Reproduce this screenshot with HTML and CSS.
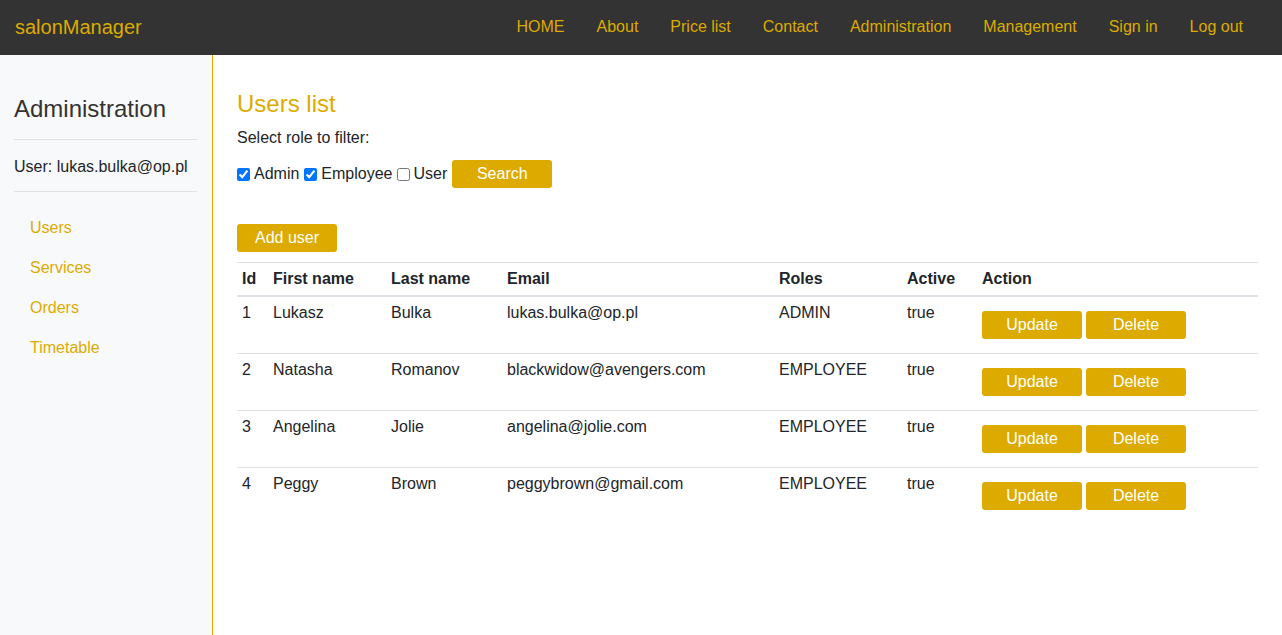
FILE: index.html
```html
<!DOCTYPE html>
<html lang="en">
<head>
<meta charset="utf-8">
<title>salonManager</title>
<link rel="stylesheet" href="styles.css">
</head>
<body>
<header class="navbar">
  <a class="brand" href="#">salonManager</a>
  <nav class="nav">
    <a href="#">HOME</a>
    <a href="#">About</a>
    <a href="#">Price list</a>
    <a href="#">Contact</a>
    <a href="#">Administration</a>
    <a href="#">Management</a>
    <a href="#">Sign in</a>
    <a href="#">Log out</a>
  </nav>
</header>
<div class="layout">
  <aside class="sidebar">
    <h3 class="side-title">Administration</h3>
    <hr class="divider divider-top">
    <p class="side-user">User: lukas.bulka@op.pl</p>
    <hr class="divider divider-bottom">
    <ul class="side-nav">
      <li><a href="#">Users</a></li>
      <li><a href="#">Services</a></li>
      <li><a href="#">Orders</a></li>
      <li><a href="#">Timetable</a></li>
    </ul>
  </aside>
  <main class="content">
    <h2 class="page-title">Users list</h2>
    <p class="filter-label">Select role to filter:</p>
    <form class="filter">
      <label class="check check-wide"><input type="checkbox" checked> Admin</label>
      <label class="check"><input type="checkbox" checked> Employee</label>
      <label class="check check-wide"><input type="checkbox"> User</label>
      <button type="button" class="btn">Search</button>
    </form>
    <div class="add-row"><button type="button" class="btn">Add user</button></div>
    <table class="users">
      <colgroup>
        <col class="c-id"><col class="c-first"><col class="c-last"><col class="c-email"><col class="c-roles"><col class="c-active"><col class="c-action">
      </colgroup>
      <thead>
        <tr><th>Id</th><th>First name</th><th>Last name</th><th>Email</th><th>Roles</th><th>Active</th><th>Action</th></tr>
      </thead>
      <tbody>
        <tr><td>1</td><td>Lukasz</td><td>Bulka</td><td>lukas.bulka@op.pl</td><td>ADMIN</td><td>true</td><td class="actions"><button type="button" class="btn">Update</button> <button type="button" class="btn">Delete</button></td></tr>
        <tr><td>2</td><td>Natasha</td><td>Romanov</td><td>blackwidow@avengers.com</td><td>EMPLOYEE</td><td>true</td><td class="actions"><button type="button" class="btn">Update</button> <button type="button" class="btn">Delete</button></td></tr>
        <tr><td>3</td><td>Angelina</td><td>Jolie</td><td>angelina@jolie.com</td><td>EMPLOYEE</td><td>true</td><td class="actions"><button type="button" class="btn">Update</button> <button type="button" class="btn">Delete</button></td></tr>
        <tr><td>4</td><td>Peggy</td><td>Brown</td><td>peggybrown@gmail.com</td><td>EMPLOYEE</td><td>true</td><td class="actions"><button type="button" class="btn">Update</button> <button type="button" class="btn">Delete</button></td></tr>
      </tbody>
    </table>
  </main>
</div>
</body>
</html>
```
FILE: styles.css
```css
* { box-sizing: border-box; }
html, body { height: 100%; }
body {
  margin: 0;
  font-family: "Liberation Sans", Arial, sans-serif;
  font-size: 16px;
  line-height: 24px;
  color: #212529;
  background: #fff;
  display: flex;
  flex-direction: column;
}
a { text-decoration: none; color: #ddab00; }

.navbar {
  height: 55px;
  background: #333333;
  display: flex;
  align-items: center;
  justify-content: space-between;
  padding: 0 23px 2px 15px;
  flex-shrink: 0;
}
.brand { font-size: 20px; line-height: 30px; color: #ddab00; }
.nav { display: flex; }
.nav a { padding: 0 16px; line-height: 24px; color: #ddab00; }

.layout { flex: 1; display: flex; min-height: 0; }

.sidebar {
  width: 213px;
  flex-shrink: 0;
  background: #f8f9fa;
  border-right: 1px solid #ddab00;
  padding: 39px 15px 0 14px;
}
.side-title {
  margin: 0;
  font-size: 24px;
  line-height: 29px;
  font-weight: 400;
  color: #333333;
}
.divider {
  border: 0;
  border-top: 1px solid #dee2e6;
}
.divider-top { margin: 16px 0 15px; }
.divider-bottom { margin: 12px 0 16px; }
.side-user { margin: 0; }
.side-nav { list-style: none; margin: 0; padding: 0 0 0 16px; }
.side-nav li a { display: block; padding: 8px 0; line-height: 24px; }

.content { flex: 1; padding: 34px 24px 0 24px; }
.page-title {
  margin: 0 0 8px;
  font-size: 24px;
  line-height: 29px;
  font-weight: 400;
  color: #ddab00;
}
.filter-label { margin: 0 0 10px; }
.filter { display: flex; align-items: center; height: 28px; }
.check { display: inline-flex; align-items: center; margin-right: 4px; }
.check-wide { margin-right: 5px; }
.check input { margin: 0 4px 0 0; width: 13px; height: 13px; }

.btn {
  font-family: inherit;
  font-size: 16px;
  line-height: 20px;
  width: 100px;
  height: 28px;
  padding: 0;
  border: 0;
  border-radius: 3px;
  background: #ddab00;
  color: #fff;
  cursor: pointer;
}
.add-row { margin-top: 36px; margin-bottom: 10px; height: 28px; }

.users { width: 100%; border-collapse: collapse; border-top: 1px solid #dee2e6; }
.users th, .users td {
  text-align: left;
  vertical-align: top;
  padding: 4px 5px 4px;
  line-height: 24px;
}
.users thead th { font-weight: 700; border-bottom: 2px solid #dee2e6; }
.users tbody td { border-bottom: 1px solid #dee2e6; padding-bottom: 28px; }
.users tbody tr:last-child td { border-bottom: 0; }
.users tbody td.actions { padding-top: 14px; padding-bottom: 14px; font-size: 0; }
.users td.actions .btn { margin-right: 4px; vertical-align: top; }
.c-id { width: 31px; }
.c-first { width: 118px; }
.c-last { width: 116px; }
.c-email { width: 272px; }
.c-roles { width: 128px; }
.c-active { width: 75px; }
```
